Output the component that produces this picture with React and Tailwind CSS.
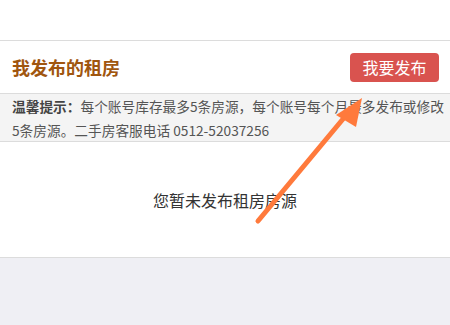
import React from 'react';

const FONT = { fontFamily: '"Noto Sans CJK SC", "Noto Sans", sans-serif' };

export default function App() {
  return (
    <div className="relative w-[450px] h-[325px] overflow-hidden bg-[#efeff4]" style={FONT}>
      {/* top bar */}
      <div className="h-[40px] bg-white" />

      <div className="bg-white border-t border-b border-[#dcdcdc]">
        {/* header */}
        <div className="h-[52px] flex items-center justify-between pl-3 pr-[11px]">
          <span className="text-[18px] font-bold text-[#a0560f] leading-none">我发布的租房</span>
          <button className="w-[89px] h-[29px] rounded bg-[#d9534f] text-white text-[16px] leading-none flex items-center justify-center">
            我要发布
          </button>
        </div>

        {/* tip */}
        <div className="h-[49px] bg-[#f4f4f4] border-t border-b border-[#dcdcdc] pl-3 text-[13.7px] leading-[24px] text-[#555] whitespace-nowrap">
          <div>
            <span className="font-bold text-[#444]">温馨提示：</span>每个账号库存最多5条房源，每个账号每个月最多发布或修改
          </div>
          <div>5条房源。二手房客服电话 0512-52037256</div>
        </div>

        {/* empty state */}
        <div className="h-[115px] flex items-center justify-center text-[16px] text-[#333]">
          您暂未发布租房房源
        </div>
      </div>

      {/* annotation arrow */}
      <svg className="absolute left-0 top-0" width="450" height="325" viewBox="0 0 450 325">
        <line x1="258" y1="221" x2="348" y2="113" stroke="#ff7a3c" strokeWidth="5" strokeLinecap="round" />
        <polygon points="362,98 336,115 356,127" fill="#ff7a3c" />
      </svg>
    </div>
  );
}
